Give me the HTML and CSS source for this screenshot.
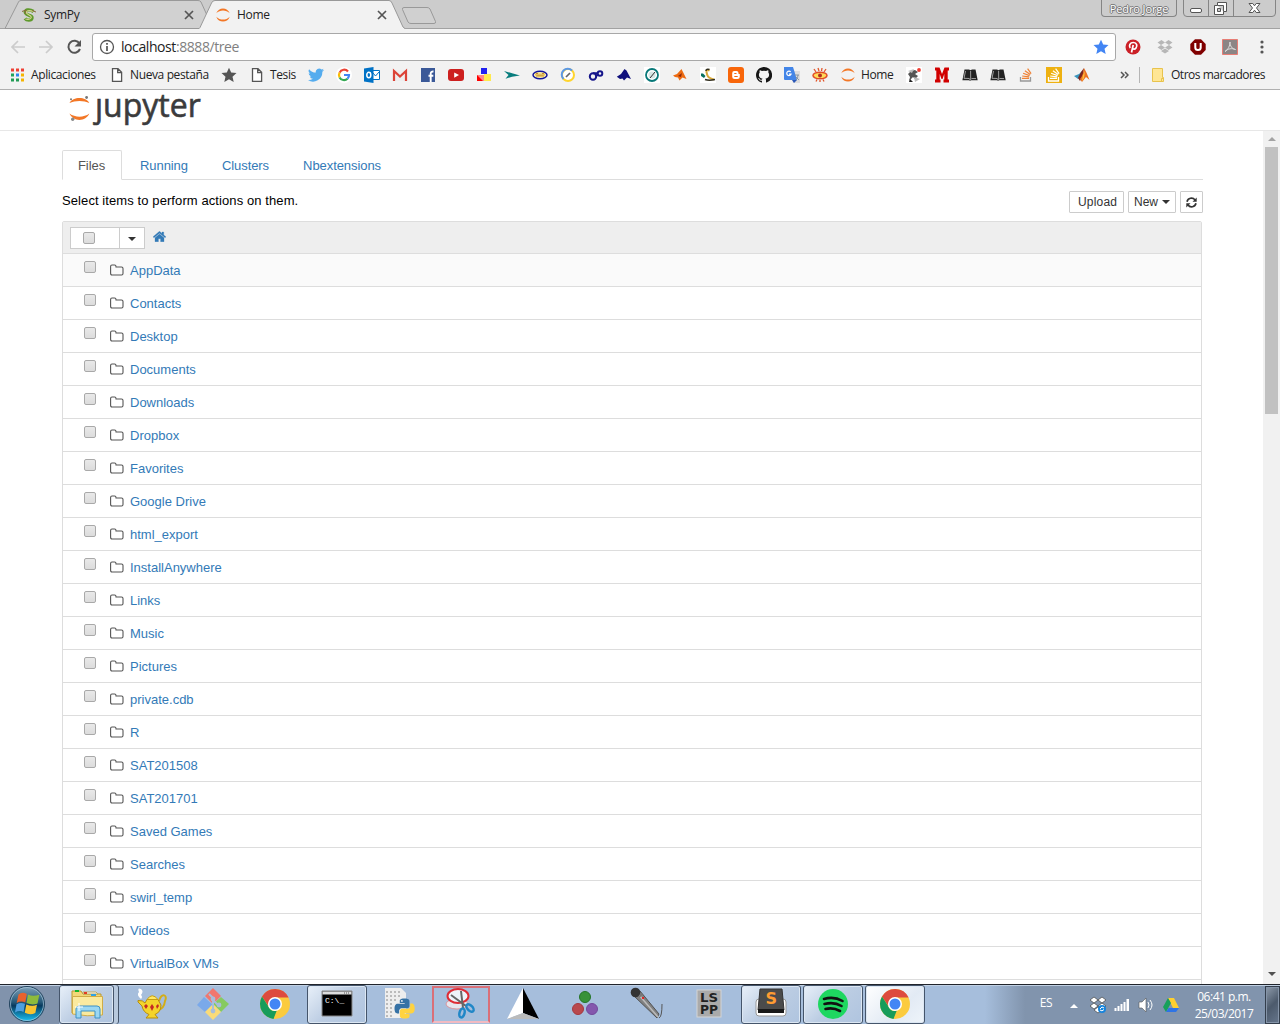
FILE: index.html
```html
<!DOCTYPE html>
<html lang="es">
<head>
<meta charset="utf-8">
<title>Home</title>
<link rel="stylesheet" href="styles.css">
</head>
<body>
<svg class="defs" width="0" height="0">
  <defs>
    <symbol id="folder" viewBox="0 0 14 12"><path d="M.6 9.3V2.4Q.6 1 2 1H4.6Q6 1 6 2.4V3H11.5Q13 3 13 4.4V9.6Q13 11 11.6 11H2Q.6 11 .6 9.3Z" fill="none" stroke="#555" stroke-width="1.1"/></symbol>
    <symbol id="ring" viewBox="0 0 16 16"><path d="M1.300 6.300C3.500-.2 12.500-.2 14.700 6.300 11 2.500 5 2.500 1.300 6.300ZM1.300 9.700C3.500 16.200 12.500 16.200 14.700 9.700 11 13.500 5 13.500 1.300 9.700Z" fill="#f37726"/></symbol>
    <symbol id="page" viewBox="0 0 16 16"><path d="M3.500 1.700H9L12.600 5.300V14.300H3.500ZM8.700 2V5.600H12.500" fill="#fff" stroke="#555" stroke-width="1.300"/></symbol>
    <symbol id="star" viewBox="0 0 16 16"><path d="M8 .7 10.200 5.600 15.500 6.100 11.500 9.700 12.700 15 8 12.200 3.300 15 4.500 9.700.5 6.100 5.800 5.600Z"/></symbol>
    <symbol id="chrome" viewBox="0 0 32 32"><circle cx="16" cy="16" r="15" fill="#fbcb3e"/><path d="M3 8.500A15 15 0 0 1 29.600 9.500H16A6.800 6.800 0 0 0 9.600 18.200Z" fill="#dd4b3e"/><path d="M3 8.500 10.100 19.400A6.800 6.800 0 0 0 17.800 22.600L14.500 30.900A15 15 0 0 1 3 8.500Z" fill="#189c5a"/><circle cx="16" cy="16" r="7" fill="#fff"/><circle cx="16" cy="16" r="5.500" fill="#4285f4"/></symbol>
    <symbol id="reader" viewBox="0 0 16 16"><path d="M2.500 2.500 7 2.600 8.500 3.300 10 2.600 13.500 2.500 15.700 13.300H9.200L8 13.800 7 13.300H.4Z" fill="#222"/><path d="M3.500 4 2 11.300 7.300 11.500 8.200 13M8.600 4 8.700 12.800M14 11.600 9.500 11.500" stroke="#bbb" stroke-width=".8" fill="none"/></symbol>
    <symbol id="stack" viewBox="0 0 16 16"><path d="M4 11.300H11M4.200 9 11.100 9.900M5.100 6.300 11.600 8.600M6.900 3.700 12.300 7.500M9.600 1.700 13.100 6.700" stroke-width="1.200" fill="none"/></symbol>
    <linearGradient id="orb" x1="0" y1="0" x2="0" y2="1"><stop offset="0" stop-color="#7fa1b9"/><stop offset=".45" stop-color="#255878"/><stop offset=".55" stop-color="#07395d"/><stop offset="1" stop-color="#19c4f5"/></linearGradient>
  </defs>
</svg>

<header class="browser">
  <div class="strip">
    <svg class="strip-art" width="1280" height="29" viewBox="0 0 1280 29">
      <path d="M0 28.500H1280" stroke="#a2a2a2"/>
      <path d="M5 28.500 18.500 2Q19 .5 21 .5H198Q200 .5 201 2L213 28.500Z" fill="#d1d1d1" stroke="#999"/>
      <path d="M199 29 200 27.500 211.500 3Q212.500.5 215 .5H389Q391 .5 392 3L403 27 405 29Z" fill="#f2f2f2"/>
      <path d="M199 28.500 200 27.500 211.500 3Q212.500.5 215 .5H389Q391 .5 392 3L403 27 405 28.500" fill="none" stroke="#999"/>
      <path d="M404 7.500H427Q429 7.500 430 9L435.500 21.500Q436 23.500 434 23.500H411Q409 23.500 408 22L402.500 9.500Q402 7.500 404 7.500Z" fill="#d0d0d0" stroke="#999"/>
    </svg>
    <div class="tab tab-back">
      <svg width="16" height="16" viewBox="0 0 16 16"><path d="M12.500 4.500C8 1.500 3 3 4.500 6S11.500 8 11 11 5.500 13.500 4 11.500" fill="none" stroke="#5f9a2c" stroke-width="3.400"/><path d="M12 4.500C8 2.500 4.500 4 5.500 6S11.500 9 10 11 6 12.500 4.500 12" fill="none" stroke="#d3d48d" stroke-width="1.200"/><path d="M1 4.500 5 3 4 7M11 3.500 15 5" stroke="#8a6b3d" fill="none"/></svg>
      <span>SymPy</span>
      <svg class="x" width="10" height="10" viewBox="0 0 10 10"><path d="M1 1 9 9M9 1 1 9" stroke="#555" stroke-width="1.700"/></svg>
    </div>
    <div class="tab tab-front">
      <svg width="16" height="16"><use href="#ring"/></svg>
      <span>Home</span>
      <svg class="x" width="10" height="10" viewBox="0 0 10 10"><path d="M1 1 9 9M9 1 1 9" stroke="#555" stroke-width="1.700"/></svg>
    </div>
    <div class="user">Pedro Jorge</div>
    <svg class="win" width="94" height="18" viewBox="0 0 94 18">
      <path d="M.5 0V13Q.5 16.500 4 16.500H89Q92.500 16.500 92.500 13V0M25.500 0V16M50.500 0V16" fill="none" stroke="#858585"/>
      <rect x="7.500" y="8.500" width="11" height="4" rx="1.500" fill="#fff" stroke="#555"/>
      <path d="M34.500 2.500H43.500V11.500H40.500V14.500H31.500V5.500H34.500Z" fill="#fff" stroke="#555"/><path d="M34.500 5.500H40.500V11.500M34.500 8.500H37.500V11.500H34.500Z" fill="#ccc" stroke="#555"/>
      <path d="M66 3.500H69.800L71.500 5.800 73.200 3.500H77L73.500 8 77 12.500H73.200L71.500 10.200 69.800 12.500H66L69.500 8Z" fill="#fff" stroke="#555"/>
    </svg>
  </div>

  <div class="toolbar">
    <svg width="92" height="32" viewBox="0 0 92 32">
      <path d="M25 18H12M18 12 12 18 18 24M39 18H52M46 12 52 18 46 24" fill="none" stroke="#ccc" stroke-width="1.700"/>
      <path d="M79.500 14.500A6 6 0 1 0 80 20" fill="none" stroke="#555" stroke-width="2"/><path d="M81 11V17.500H74.500Z" fill="#555"/>
    </svg>
    <div class="address">
      <svg width="16" height="16" viewBox="0 0 16 16"><circle cx="8" cy="8" r="6.500" fill="none" stroke="#555" stroke-width="1.300"/><path d="M8 7V12M8 4V5.800" stroke="#555" stroke-width="1.700"/></svg>
      <span class="url">localhost<span>:8888/tree</span></span>
      <svg class="fav" width="16" height="16" fill="#4285f4"><use href="#star"/></svg>
    </div>
    <div class="extensions">
      <svg width="16" height="16" viewBox="0 0 16 16"><circle cx="8" cy="8" r="7.500" fill="#cb2027"/><path d="M6.500 13.500 8.200 6M5.200 9C3.500 6.500 5 3.500 8.300 3.500 12 3.500 12.500 7 11 9S8 10 7.600 9" fill="none" stroke="#fff" stroke-width="1.700"/></svg>
      <svg width="16" height="16" viewBox="0 0 16 16"><path d="M4.500 1 8 3.500 4 6 .5 3.500ZM11.500 1 15.500 3.500 12 6 8 3.500ZM4 6 8 8.500 4.500 11 .5 8.500ZM12 6 15.500 8.500 11.500 11 8 8.500ZM4 12 8 9.500 12 12 8 14.500Z" fill="#b7b7b7"/></svg>
      <svg width="16" height="16" viewBox="0 0 16 16"><path d="M5 .3H11L15.700 5V11L11 15.700H5L.3 11V5Z" fill="#800000"/><path d="M5.300 4V8.500Q5.300 11 8 11T10.700 8.500V4" fill="none" stroke="#fff" stroke-width="2"/></svg>
      <svg width="16" height="16" viewBox="0 0 16 16"><path d="M.5.500H15.500V15.500H.5Z" fill="#8b8585" stroke="#e77d75"/><path d="M3 12.500C6 11 8 7 8 3 8 7 10 10 13.500 10.500 10 9 6 9.500 3 12.500Z" fill="none" stroke="#ddd"/></svg>
      <svg width="16" height="16" viewBox="0 0 16 16" fill="#555"><circle cx="8" cy="3" r="1.600"/><circle cx="8" cy="8" r="1.600"/><circle cx="8" cy="13" r="1.600"/></svg>
    </div>
  </div>

  <nav class="bookmarks">
    <div class="bm apps"><svg width="16" height="16" viewBox="0 0 16 16"><path d="M2 1.500h3v3H2zM7 1.500h3v3H7zM12 1.500h3v3h-3z" fill="#ee4035"/><path d="M2 6.500h3v3H2z" fill="#21a35b"/><path d="M7 6.500h3v3H7z" fill="#2f86ee"/><path d="M12 6.500h3v3h-3z" fill="#f5b400"/><path d="M2 11.500h3v3H2zM7 11.500h3v3H7z" fill="#219b55"/><path d="M12 11.500h3v3h-3z" fill="#f5b400"/></svg><span>Aplicaciones</span></div>
    <div class="bm nueva"><svg width="16" height="16"><use href="#page"/></svg><span>Nueva pestaña</span></div>
    <div class="bm"><svg width="16" height="16" fill="#555"><use href="#star"/></svg></div>
    <div class="bm tesis"><svg width="16" height="16"><use href="#page"/></svg><span>Tesis</span></div>
    <div class="bm"><svg width="16" height="16" viewBox="0 0 24 24"><path d="M24 4.600a10 10 0 0 1-2.800.8A5 5 0 0 0 23.300 2.700a10 10 0 0 1-3.100 1.200A4.900 4.900 0 0 0 11.800 8.400 14 14 0 0 1 1.700 3.200a4.900 4.900 0 0 0 1.500 6.600A5 5 0 0 1 1 9.200a4.900 4.900 0 0 0 3.900 4.900 5 5 0 0 1-2.200.1 4.900 4.900 0 0 0 4.600 3.400A9.900 9.900 0 0 1 0 19.600 14 14 0 0 0 21.500 7.100 10 10 0 0 0 24 4.600z" fill="#55acee"/></svg></div>
    <div class="bm"><svg width="16" height="16" viewBox="0 0 16 16"><circle cx="8" cy="8" r="8" fill="#fff"/><g fill="none" stroke-width="2.200"><path d="M12 4.500A5 5 0 0 0 3.600 5.600" stroke="#ea4335"/><path d="M3.600 5.600A5 5 0 0 0 3.600 10.400" stroke="#fbbc05"/><path d="M3.600 10.400A5 5 0 0 0 11.500 11.700" stroke="#34a853"/><path d="M11.500 11.700A5 5 0 0 0 13 8H8" stroke="#4285f4"/></g></svg></div>
    <div class="bm"><svg width="16" height="16" viewBox="0 0 16 16"><path d="M8 3.500H15.500V12.500H8Z" fill="#fff" stroke="#0072c6"/><path d="M9 6 11.500 9 15 5" fill="none" stroke="#0072c6"/><path d="M0 1.500 9.500 0V16L0 14.500Z" fill="#0072c6"/><ellipse cx="4.800" cy="8" rx="2" ry="2.700" fill="none" stroke="#fff" stroke-width="1.500"/></svg></div>
    <div class="bm"><svg width="16" height="16" viewBox="0 0 16 16"><path d="M1 3H15V14H1Z" fill="#eee"/><path d="M2 14V4L8 9.500 14 4V14" fill="none" stroke="#dc4337" stroke-width="2.200"/></svg></div>
    <div class="bm"><svg width="16" height="16" viewBox="0 0 16 16"><path d="M1 1H15V15H1Z" fill="#3b5998"/><path d="M10.700 15V6.500Q10.700 4.300 13.500 4.500M8.500 8.700H13.300" fill="none" stroke="#fff" stroke-width="1.900"/></svg></div>
    <div class="bm"><svg width="16" height="16" viewBox="0 0 16 16"><rect y="2" width="16" height="12" rx="3" fill="#cd201f"/><path d="M6.200 5.500 11 8 6.200 10.700Z" fill="#fff"/></svg></div>
    <div class="bm"><svg width="16" height="16" viewBox="0 0 16 16"><path d="M5 1h6v6H5z" fill="#2020f0"/><path d="M1 8h7v6H1z" fill="#f88"/><path d="M8 7h7v7H8z" fill="#ffe94d"/><path d="M1 8 7 14H1z" fill="#f00"/></svg></div>
    <div class="bm"><svg width="16" height="16" viewBox="0 0 16 16"><path d="M0 4 9 6.500 15.900 8.500 8 9.700 1.500 11.700 4.500 8Z" fill="#087d7d"/></svg></div>
    <div class="bm"><svg width="16" height="16" viewBox="0 0 16 16"><ellipse cx="8" cy="8" rx="7" ry="3.700" fill="#fff4ac" stroke="#15159c" stroke-width="1.500"/><path d="M4 8.500V6.500H6V9M8 9V6.500M10 9V6.500H12V8.500M4 9H12" fill="none" stroke="#c58b26"/></svg></div>
    <div class="bm"><svg width="16" height="16" viewBox="0 0 16 16"><circle cx="8" cy="8" r="6" fill="#fff" stroke="#ffd52d" stroke-width="2"/><path d="M3.500 12A6 6 0 0 1 12 3.500" fill="none" stroke="#5b98e7" stroke-width="2"/><path d="M6 10 10 6" stroke="#666" stroke-width="1.700"/></svg></div>
    <div class="bm"><svg width="16" height="16" viewBox="0 0 16 16" fill="none" stroke="#15158a" stroke-width="2"><circle cx="5" cy="9.500" r="3.200"/><circle cx="12" cy="6.500" r="2.300"/><path d="M7.500 9.500 10 7.500M5 6.300H10"/></svg></div>
    <div class="bm"><svg width="16" height="16" viewBox="0 0 16 16"><path d="M.8 9.700 5 7 8.500 2 10.500 3.500 15 12 11 10.500 8 13.500 6.500 11.500 4 12Z" fill="#10107c"/></svg></div>
    <div class="bm"><svg width="16" height="16" viewBox="0 0 16 16"><path d="M0 0H16V16H0Z" fill="#fff"/><circle cx="8" cy="8" r="6" fill="none" stroke="#087878" stroke-width="1.800"/><circle cx="8" cy="8" r="3.600" fill="#d6e6e4"/><path d="M6 11 11 5" stroke="#333"/></svg></div>
    <div class="bm"><svg width="16" height="16" viewBox="0 0 16 16"><path d="M1 8.500 5 7 9.500 2 11 5 14.500 12 10.500 10.500 7.500 13.500 6 10.500 3 10Z" fill="#ed6b12"/><path d="M6 9 10 6 9 10Z" fill="#8b280d"/></svg></div>
    <div class="bm"><svg width="16" height="16" viewBox="0 0 16 16"><path d="M0 0H16V16H0Z" fill="#fff"/><path d="M9.500 3.500Q6 2 6.500 5T8 9.500 14 12.500" fill="none" stroke="#d9a93a" stroke-width="2"/><path d="M9.500 2.500Q6 1.500 6 4M5 12.500Q9 14 15 12.500" fill="none" stroke="#302c1c" stroke-width="1.500"/><path d="M1 6.500H3L5.500 9 4 11 1 9Z" fill="#07705e"/></svg></div>
    <div class="bm"><svg width="16" height="16" viewBox="0 0 16 16"><rect width="16" height="16" rx="3" fill="#f8660a"/><path d="M6.200 4H8.500Q10.500 4 10.500 6V7H11.800V9.700Q11.800 12 9.500 12H6.500Q4.200 12 4.200 9.700V6.300Q4.200 4 6.200 4Z" fill="#fff"/><path d="M6.300 6.500H8.500M6.300 9.500H9.700" stroke="#f8660a" stroke-width="1.200"/></svg></div>
    <div class="bm"><svg width="16" height="16" viewBox="0 0 16 16"><path fill="#161616" d="M8 0C3.600 0 0 3.600 0 8c0 3.500 2.300 6.500 5.500 7.600.4.100.5-.2.500-.4v-1.500c-2.200.5-2.700-.9-2.700-.9-.4-.9-.9-1.200-.9-1.200-.7-.5.1-.5.1-.5.800.1 1.200.8 1.200.8.700 1.300 1.900.9 2.300.7.1-.5.300-.9.500-1.100-1.800-.2-3.600-.9-3.600-4 0-.9.300-1.600.8-2.100-.1-.2-.4-1 .1-2.200 0 0 .7-.2 2.200.8a7.400 7.400 0 0 1 4 0c1.500-1 2.200-.8 2.200-.8.400 1.200.1 2 .1 2.200.5.600.8 1.300.8 2.100 0 3.100-1.900 3.800-3.700 4 .3.300.6.800.6 1.500v2.200c0 .2.100.5.600.4A8 8 0 0 0 8 0z"/></svg></div>
    <div class="bm"><svg width="16" height="16" viewBox="0 0 16 16"><path d="M6 4H16V16H9Z" fill="#ddd"/><path d="M0 0H9L13 13H1Q0 13 0 12Z" fill="#4285e8"/><path d="M13 13H8L10 16Z" fill="#2957b8"/><path d="M6.700 5A2.200 2.200 0 1 0 7 7.200H5" fill="none" stroke="#fff" stroke-width="1.200"/><path d="M10.500 8H15M12 13Q14 11 14 8M12 10 15 13" fill="none" stroke="#789" stroke-width=".8"/></svg></div>
    <div class="bm"><svg width="16" height="16" viewBox="0 0 16 16"><ellipse cx="8" cy="8.500" rx="7" ry="3.300" fill="#ffdb59" stroke="#e14b27" stroke-width="1.500"/><circle cx="8" cy="8.500" r="2" fill="#b52d21"/><path d="M2 2 4 5M6 1 7 4M10 1 9.500 4M14 2 12 5M4 14.500 5 12.500M8 15V13M12 14.500 11 12.500" stroke="#e2562a" stroke-width="1.300"/></svg></div>
    <div class="bm homebm"><svg width="16" height="16"><use href="#ring"/></svg><span>Home</span></div>
    <div class="bm"><svg width="16" height="16" viewBox="0 0 16 16"><path d="M0 0H16V16H0Z" fill="#fff"/><path d="M2 7 5 4 9 3 12 5 9 7 12 9 9 12 7 10 5 12 3 14 4 10Z" fill="#555"/><path d="M2 4 8 2 6 6M8 10 14 12 9 15" fill="#bbb"/><path d="M4 12 7 15H3Z" fill="#222"/><circle cx="13" cy="3" r="1.900" fill="#ed3c31"/></svg></div>
    <div class="bm"><svg width="16" height="16" viewBox="0 0 16 16"><path d="M1 .5H5.500L8 7 10.500.500H15V3.500H13.700V12.500H15V15.500H9.500V12.500H10.300V7L8.500 12H7.500L5.700 7V12.500H6.500V15.500H1V12.500H2.300V3.500H1Z" fill="#d10000"/></svg></div>
    <div class="bm"><svg width="16" height="16"><use href="#reader"/></svg></div>
    <div class="bm"><svg width="16" height="16"><use href="#reader"/></svg></div>
    <div class="bm"><svg width="16" height="16" viewBox="0 0 16 16"><use href="#stack" stroke="#ef8236"/><path d="M2.500 10V14H12.500V10" fill="none" stroke="#999" stroke-width="1.300"/></svg></div>
    <div class="bm"><svg width="16" height="16" viewBox="0 0 16 16"><path d="M0 0H16V16H0Z" fill="#eeb111"/><use href="#stack" stroke="#fff"/><path d="M2.500 10V14H12.500V10" fill="none" stroke="#fff" stroke-width="1.300"/></svg></div>
    <div class="bm"><svg width="16" height="16" viewBox="0 0 16 16"><path d="M0 9 5 7 8 4 6 11 4 12Z" fill="#3995bd"/><path d="M4 11 7 5 10 1 9 9 6 14Z" fill="#7d241b"/><path d="M10 1Q12 4 15.500 13L12 10 8 15 6 12Q9 9 10 1Z" fill="#eb7322"/><path d="M9 8 11 4 10 11 8 14Z" fill="#ffc03b"/></svg></div>
    <svg class="more" width="9" height="8" viewBox="0 0 9 8"><path d="M1 1 4 4 1 7M5 1 8 4 5 7" fill="none" stroke="#555" stroke-width="1.500"/></svg>
    <div class="bm others"><svg width="16" height="16" viewBox="0 0 16 16"><path d="M2.500 1.500H12.500V10.500H13.500V14.500H2.500Z" fill="#ffe694" stroke="#e8c34d"/><path d="M11.500 14V11.500H13" fill="none" stroke="#e8c34d"/></svg><span>Otros marcadores</span></div>
  </nav>
</header>

<div class="brand">
  <svg width="24" height="30" viewBox="0 0 24 30"><path d="M1.500 9C5 2.300 18 2.300 21.300 9 16 6.300 7 6.300 1.500 9ZM1.500 19.600C5 28 18 28 21.300 19.600 16 23.800 7 23.800 1.500 19.600Z" fill="#f37726"/><circle cx="3" cy="5.300" r="1" fill="#777"/><circle cx="18.600" cy="3.500" r="1.400" fill="#777"/><circle cx="4.700" cy="25.300" r="1.700" fill="#888"/></svg>
  <div class="wordmark">jupyter</div>
</div>

<div class="viewport">
  <main>
    <ul class="nav">
      <li class="on">Files</li><li>Running</li><li>Clusters</li><li>Nbextensions</li>
    </ul>
    <div class="actions">
      <p>Select items to perform actions on them.</p>
      <button class="upload">Upload</button>
      <button class="new">New <i class="caret"></i></button>
      <button class="refresh"><svg width="11" height="11" viewBox="0 0 11 11"><path d="M1 4.700A4.500 4.500 0 0 1 9 3M10 6.300A4.500 4.500 0 0 1 2 8" fill="none" stroke="#333" stroke-width="1.700"/><path d="M10.700.500V4.700H6.500ZM.3 10.500V6.300H4.500Z" fill="#333"/></svg></button>
    </div>
    <div class="list">
      <div class="list-head">
        <div class="select"><span><i class="check"></i></span><b><i class="caret"></i></b></div>
        <svg width="13" height="11" viewBox="0 0 13 11"><path d="M6.500.3 9 2.400V1H10.700V3.900L12.900 5.700 12.100 6.800 6.500 2.200.9 6.800.1 5.700ZM2 6.700 6.500 3 11 6.700V10.700H7.600V7.700H5.400V10.700H2Z" fill="#337ab7" stroke="#337ab7" stroke-width=".3"/></svg>
      </div>
      <div class="row hover"><i class="check"></i><svg><use href="#folder"/></svg><a>AppData</a></div>
      <div class="row"><i class="check"></i><svg><use href="#folder"/></svg><a>Contacts</a></div>
      <div class="row"><i class="check"></i><svg><use href="#folder"/></svg><a>Desktop</a></div>
      <div class="row"><i class="check"></i><svg><use href="#folder"/></svg><a>Documents</a></div>
      <div class="row"><i class="check"></i><svg><use href="#folder"/></svg><a>Downloads</a></div>
      <div class="row"><i class="check"></i><svg><use href="#folder"/></svg><a>Dropbox</a></div>
      <div class="row"><i class="check"></i><svg><use href="#folder"/></svg><a>Favorites</a></div>
      <div class="row"><i class="check"></i><svg><use href="#folder"/></svg><a>Google Drive</a></div>
      <div class="row"><i class="check"></i><svg><use href="#folder"/></svg><a>html_export</a></div>
      <div class="row"><i class="check"></i><svg><use href="#folder"/></svg><a>InstallAnywhere</a></div>
      <div class="row"><i class="check"></i><svg><use href="#folder"/></svg><a>Links</a></div>
      <div class="row"><i class="check"></i><svg><use href="#folder"/></svg><a>Music</a></div>
      <div class="row"><i class="check"></i><svg><use href="#folder"/></svg><a>Pictures</a></div>
      <div class="row"><i class="check"></i><svg><use href="#folder"/></svg><a>private.cdb</a></div>
      <div class="row"><i class="check"></i><svg><use href="#folder"/></svg><a>R</a></div>
      <div class="row"><i class="check"></i><svg><use href="#folder"/></svg><a>SAT201508</a></div>
      <div class="row"><i class="check"></i><svg><use href="#folder"/></svg><a>SAT201701</a></div>
      <div class="row"><i class="check"></i><svg><use href="#folder"/></svg><a>Saved Games</a></div>
      <div class="row"><i class="check"></i><svg><use href="#folder"/></svg><a>Searches</a></div>
      <div class="row"><i class="check"></i><svg><use href="#folder"/></svg><a>swirl_temp</a></div>
      <div class="row"><i class="check"></i><svg><use href="#folder"/></svg><a>Videos</a></div>
      <div class="row"><i class="check"></i><svg><use href="#folder"/></svg><a>VirtualBox VMs</a></div>
      <div class="row"></div>
    </div>
  </main>
  <div class="scrollbar"><i class="up"></i><div class="thumb"></div><i class="down"></i></div>
</div>

<footer class="taskbar">
  <div class="start"><svg width="38" height="38" viewBox="0 0 38 38"><circle cx="19" cy="19" r="17.500" fill="url(#orb)" stroke="#24455f"/><circle cx="19" cy="19" r="16.500" fill="none" stroke="#a9c6da" stroke-opacity=".7"/><path d="M10.500 9.500Q14 6.500 18.800 9L17.300 17.500Q12.500 15.500 8.700 18Z" fill="#e8622c"/><path d="M20 9.500Q25 12 31.300 9.700L29.500 18.500Q24 20.500 18.500 18Z" fill="#8dbb3c"/><path d="M8.500 19.300Q12.500 17 17 18.800L15.500 27Q11.500 25 7 27.500Z" fill="#4d9fe0"/><path d="M18.300 19.500Q24 21.800 29 19.800L27.300 28Q22 30.500 16.800 27.700Z" fill="#f8c431"/></svg></div>
  <div class="task open stacked"><svg width="34" height="34" viewBox="0 0 34 34"><path d="M2 4H11L13 7H31V26H2Z" fill="#f3d878" stroke="#b99731"/><path d="M5 3H9V5H5Z" fill="#15b52c"/><path d="M13 5H26L28 7H13Z" fill="#fff" stroke="#bca65a"/><path d="M14 5H17V7H14Z" fill="#e23a24"/><path d="M21 7H26V9H21Z" fill="#31a2e6"/><path d="M2.500 9.500H32.500V28Q17 30 2.500 27Z" fill="#fbea9f" stroke="#d0ac47"/><path d="M6 31V22Q6 19 9 19H27Q30 19 30 22V31H25V24H11V31Z" fill="#9bd7f2" stroke="#3d91c6"/><path d="M9 16V24M5 20H13" stroke="#fff"/></svg></div>
  <div class="task"><svg width="34" height="34" viewBox="0 0 34 34"><path d="M7 12Q2 8 5 5 3 0 7 2 10 4 7 8Q9 10 7 12" fill="#fff"/><path d="M25 14C28 5 34 8 31 14Q30 22 24 23" fill="none" stroke="#d3ad16" stroke-width="2"/><path d="M4 13.500Q9 13 11 16L13 12.500H24L27 18Q27 25 21 27.500L24 31H12L15 27.500Q9 25 8 19L4 15Z" fill="#f4d42b" stroke="#b78d0c"/><path d="M13 12.500Q18 5 24 12.500Z" fill="#ffe863" stroke="#c69e15"/><path d="M12 17 14 19 12 22 10 19ZM18 17 20 20 18 24 16 20ZM24 17 25 19 23 22 22 19Z" fill="#c62b24"/></svg></div>
  <div class="task"><svg width="34" height="34" viewBox="0 0 34 34"><path d="M17 1 25 9 17 17 9 9Z" fill="#f0776f"/><path d="M8 10 17 18 9 25 1 18Z" fill="#7aa9ea"/><path d="M25 10 33 17 25 25 17 17Z" fill="#86ca60"/><path d="M17 17 25 25 17 33 9 25Z" fill="#fadb78"/><path d="M13 7 17 11V25M17 13 22 18" fill="none" stroke="#a7bedb" stroke-width="2"/><circle cx="17" cy="12" r="2.400" fill="#a7bedb"/><circle cx="17" cy="24" r="2.400" fill="#a7bedb"/><circle cx="23" cy="18" r="2.400" fill="#a7bedb"/></svg></div>
  <div class="task"><svg width="32" height="32"><use href="#chrome"/></svg></div>
  <div class="task open"><svg width="32" height="28" viewBox="0 0 32 28"><path d="M1 1H31V26H1Z" fill="#000" stroke="#888"/><path d="M1.500 1.500H30.500V4.500H1.500Z" fill="#ddd"/><path d="M23 3H29" stroke="#555" stroke-dasharray="1 1"/><text x="4" y="13" class="prompt">C:\_</text></svg></div>
  <div class="task"><svg width="34" height="34" viewBox="0 0 34 34"><path d="M3 1H19L24 6V31H3Z" fill="#eee"/><path d="M5 4V30M9 4V30M13 4V14M17 4V12" stroke="#aaa" stroke-width="1.500" stroke-dasharray="2 2"/><g transform="translate(12.500 11.500) scale(.84)"><path d="M12 0C6 0 6.300 2.600 6.300 2.600V5.300H12.100V6.200H4S0 5.700 0 12 3.400 17.900 3.400 17.900H5.500V15.100S5.400 11.700 8.800 11.700H14.600S17.800 11.700 17.800 8.500V3.200S18.300 0 12 0Z" fill="#3672a5"/><path d="M12.200 23.900C18.200 23.900 17.900 21.300 17.900 21.300V18.600H12.100V17.800H20.200S24.100 18.200 24.100 12 20.700 6 20.700 6H18.700V8.900S18.800 12.300 15.400 12.300H9.600S6.400 12.200 6.400 15.400V20.700S5.900 23.900 12.200 23.900Z" fill="#ffd340"/><circle cx="8.800" cy="2.900" r="1" fill="#fff"/></g></svg></div>
  <div class="task snip"><svg width="34" height="34" viewBox="0 0 34 34"><ellipse cx="13" cy="17" rx="11" ry="5" fill="#e6e6ee" stroke="#d9979e"/><ellipse cx="14" cy="9" rx="10.500" ry="7" fill="#eef3fa" stroke="#df2c35" stroke-width="2"/><path d="M7 8 22 19M17 4 19 21" stroke="#666" stroke-width="2"/><g fill="none" stroke="#2187c7" stroke-width="2.500"><ellipse cx="18" cy="26" rx="2.500" ry="4.500" transform="rotate(15 18 26)"/><ellipse cx="26" cy="21" rx="2.500" ry="4.500" transform="rotate(-45 26 21)"/></g></svg></div>
  <div class="task"><svg width="34" height="34" viewBox="0 0 34 34"><path d="M17 1 17 26 1 32Z" fill="#fff"/><path d="M17 1 33 32 17 26Z" fill="#000"/><path d="M1 32 17 26 33 32Z" fill="#bbb"/></svg></div>
  <div class="task"><svg width="34" height="34" viewBox="0 0 34 34"><circle cx="17" cy="10" r="5.500" fill="#389239" stroke="#247427"/><circle cx="10" cy="22" r="5.500" fill="#b9484d" stroke="#a5383e"/><circle cx="24" cy="22" r="5.500" fill="#8457ad" stroke="#73489b"/></svg></div>
  <div class="task"><svg width="34" height="34" viewBox="0 0 34 34"><path d="M4 9 10 4 29 27 27 31Z" fill="#818181" stroke="#525252"/><path d="M9 8 28 30" stroke="#bbb" stroke-width="1.500"/><circle cx="5.500" cy="5.500" r="4.800" fill="#333"/><path d="M9 10 12 7" stroke="#777" stroke-width="2"/><circle cx="13" cy="11" r="1" fill="red"/><path d="M29 31Q32 30 32 17" fill="none" stroke="#555"/></svg></div>
  <div class="task"><svg width="26" height="30" viewBox="0 0 26 30"><rect x="1" y="1" width="24" height="27" fill="#aaa" stroke="#d4d4d4"/><text x="4" y="13" class="lspp" textLength="18" lengthAdjust="spacingAndGlyphs">LS</text><text x="4" y="25" class="lspp" textLength="18" lengthAdjust="spacingAndGlyphs">PP</text></svg></div>
  <div class="task open"><svg class="st" width="32" height="30" viewBox="0 0 32 30"><rect x="1" y="12" width="30" height="17" rx="3" fill="#fff" stroke="#999"/><path d="M5 2H27L29 23H3Z" fill="#4b4b4b" stroke="#333"/><path d="M3 22H29V26H3Z" fill="#191919"/><text x="10.500" y="17" class="sublime">S</text></svg></div>
  <div class="task open"><svg width="32" height="32" viewBox="0 0 32 32"><circle cx="16" cy="16" r="15" fill="#1ed760"/><path d="M7 11Q17 8 25.500 13M7.500 16Q17 13.500 24.500 18M8.500 21Q16 19 23 23" fill="none" stroke="#111" stroke-width="2.600" stroke-linecap="round"/></svg></div>
  <div class="task open bright"><svg width="32" height="32"><use href="#chrome"/></svg></div>
  <div class="tray">
    <span class="lang">ES</span>
    <svg width="110" height="20" viewBox="0 0 110 20">
      <path d="M1 13 5 9 9 13Z" fill="#fff"/>
      <path d="M25 2 29 5 25 8 21 5ZM33 2 37 5 33 8 29 5ZM25 8 29 11 25 14 21 11ZM33 8 37 11 33 14 29 11ZM29 12 33 15 29 18 25 15Z" fill="#fff" stroke="#444" stroke-width=".7"/><circle cx="33" cy="14" r="4" fill="#1684dc"/><path d="M31 14Q33 10.500 35 13M35 14.500Q33 17 31 15" fill="none" stroke="#fff"/>
      <path d="M45.500 13h2v3h-2zM48.500 11h2v5h-2zM51.500 9h2v7h-2zM54.500 7h2v9h-2zM57.500 4h2.500v12h-2.500z" fill="#fff"/>
      <path d="M70 7H73L77 3V17L73 13H70Z" fill="#fff" stroke="#555" stroke-width=".6"/><path d="M79 7Q81 10 79 13M81 5Q85 10 81 15" fill="none" stroke="#fff"/>
      <path d="M99 3H105L110 13H104Z" fill="#ffcf2e"/><path d="M99 3 102 8 97 17 94 12Z" fill="#17a05b"/><path d="M99.500 13H110L107 17H97Z" fill="#2e74e5"/>
    </svg>
    <div class="clock"><span>06:41 p.m.</span><span>25/03/2017</span></div>
    <div class="peek"></div>
  </div>
</footer>
</body>
</html>
```
FILE: styles.css
```css
* { box-sizing: border-box; }
body { margin: 0; width: 1280px; height: 1024px; overflow: hidden; display: flex; flex-direction: column; background: #fff; font: 13px/20px "Liberation Sans", Arial, sans-serif; color: #000; }
svg { flex: none; display: block; }
.defs { position: absolute; }

.browser { flex: none; height: 90px; background: #f2f2f2; border-bottom: 1px solid #b0b0b0; font: 12px/16px "Open Sans", sans-serif; color: #222; }
.strip { position: relative; height: 29px; background: #ccc; display: flex; }
.strip-art { position: absolute; left: 0; top: 0; }
.tab { position: relative; display: flex; align-items: center; height: 29px; gap: 7px; letter-spacing: -.3px; }
.tab-back { width: 194px; padding-left: 21px; }
.tab-front { width: 194px; padding-left: 21px; gap: 6px; }
.tab .x { margin-left: auto; }
.tab-front .x { margin-right: 1px; }
.user { margin-left: auto; position: relative; width: 76px; height: 17px; border: 1px solid #858585; border-top: 0; border-radius: 0 0 4px 4px; text-align: center; line-height: 18px; font-size: 11px; letter-spacing: -.1px; color: #fff; text-shadow: 1px 0 #777, -1px 0 #777, 0 1px #777, 0 -1px #777; }
.win { position: relative; margin: 0 3px 0 6px; }
.toolbar { height: 31px; display: flex; }
.address { width: 1024px; height: 28px; margin-top: 4px; border: 1px solid #a8a8a8; border-radius: 3px; background: #fff; display: flex; align-items: center; padding: 0 6px; gap: 6px; }
.url { font-size: 14px; letter-spacing: -.42px; }
.url span { color: #808080; }
.fav { margin-left: auto; }
.extensions { display: flex; gap: 16.3px; padding: 10px 0 0 9px; }
.bookmarks { height: 30px; display: flex; align-items: center; padding-left: 3px; }
.bm { flex: none; width: 28px; display: flex; align-items: center; padding-left: 6px; gap: 5px; white-space: nowrap; letter-spacing: -.38px; }
.bm.apps { width: 100px; gap: 6px; }
.bm.nueva { width: 112px; }
.bm.tesis { width: 59px; }
.bm.homebm { width: 66px; }
.more { margin: 0 10px 0 24px; }
.bm.others { width: 130px; height: 16px; border-left: 1px solid #b5b5b5; padding-left: 10px; letter-spacing: -.48px; }

.brand { flex: none; height: 41px; border-bottom: 1px solid #e7e7e7; display: flex; padding: 4px 0 0 68px; gap: 3px; }
.wordmark { position: relative; height: 34px; margin-top: -4px; font: 32px/30px "Open Sans", sans-serif; color: #3b3b3c; -webkit-text-stroke: .6px #3b3b3c; }
/* the wordmark's j has no dot */
.wordmark::before { content: ""; position: absolute; left: -2px; top: 0; width: 12px; height: 8px; background: #fff; }

.viewport { flex: none; height: 853px; display: flex; overflow: hidden; }
main { width: 1141px; margin-left: 62px; }
.nav { list-style: none; margin: 19px 0 0; padding: 0; height: 30px; display: flex; gap: 2px; border-bottom: 1px solid #ddd; color: #337ab7; }
.nav li { height: 30px; padding: 5px 15px 0; border: 1px solid transparent; letter-spacing: -.07px; }
.nav .on { width: 60px; color: #555; background: #fff; border-color: #ddd #ddd #fff; border-radius: 2px 2px 0 0; }
.actions { height: 41px; display: flex; gap: 4px; padding-top: 11px; }
.actions p { margin: 0 auto 0 0; letter-spacing: .09px; }
.actions button { height: 22px; border: 1px solid #ccc; border-radius: 1px; background: #fff; color: #333; font: 12px/18px "Liberation Sans", Arial, sans-serif; padding: 0 5px; display: flex; align-items: center; }
.actions .upload { width: 55px; padding-left: 8px; letter-spacing: .2px; }
.actions .new { width: 48px; gap: 4px; }
.actions .refresh { width: 23px; }
.caret { display: block; border: 4px solid transparent; border-top-color: #333; border-bottom: 0; }
.list { width: 1140px; border: 1px solid #ddd; border-radius: 2px 2px 0 0; }
.list-head { height: 32px; background: #eee; border-bottom: 1px solid #ddd; display: flex; padding: 5px 0 0 7px; gap: 8px; }
.list-head > svg { margin-top: 4px; }
.select { width: 75px; height: 22px; border: 1px solid #ccc; background: #fff; display: flex; }
.select span { width: 49px; border-right: 1px solid #ccc; padding: 4px 0 0 12px; }
.select b { padding: 9px 0 0 8px; }
.check { flex: none; display: block; width: 12px; height: 12px; border: 1px solid #a9a9a9; border-radius: 2px; background: linear-gradient(#e9e9e9, #dcdcdc); }
.row { height: 33px; border-bottom: 1px solid #ddd; display: flex; align-items: flex-start; padding-left: 21px; }
.row.hover { background: #fafafa; }
.row .check { margin-top: 7px; }
.row svg { width: 14px; height: 12px; margin: 10px 6px 0 14px; }
.row a { color: #337ab7; margin-top: 7px; }
.scrollbar { width: 17px; margin-left: auto; background: #f1f1f1; display: flex; flex-direction: column; align-items: center; }
.scrollbar i { border: 4px solid transparent; }
.scrollbar .up { margin-top: 2px; border-bottom-color: #a3a3a3; }
.thumb { width: 13px; height: 267px; margin-top: 6px; background: #c1c1c1; }
.scrollbar .down { margin-top: auto; margin-bottom: 4px; border-top-color: #505050; }

.taskbar { flex: none; height: 40px; border-top: 1px solid #20242b; box-shadow: inset 0 1px #c0d0e3; display: flex; background: linear-gradient(90deg, #8193ac 0 59px, #a6bedc 59px 985px, #8194ad 1025px); }
.start { width: 59px; display: flex; justify-content: center; padding-right: 5px; }
.task { width: 60px; margin-right: 2px; height: 39px; display: flex; align-items: center; justify-content: center; }
.task > svg { margin-top: -1px; }
.open { border: 1px solid #45556b; border-radius: 3px; background: linear-gradient(135deg, #e8f0f9, #bccde3 50%, #afc4df); box-shadow: inset 0 0 0 1px #dce7f3; }
.bright { background: linear-gradient(135deg, #fff, #e2eaf4 60%, #eef4fa); }
.stacked { width: 55px; margin-right: 7px; box-shadow: inset 0 0 0 1px #dce7f3, 2px 0 #b8c9dd, 4px 0 #b8c9dd, 5px 0 #45556b; }
.snip { width: 58px; margin: 1px 3px 1px 1px; height: 37px; border: 2px solid #d96f78; border-bottom-color: #f2bac1; }
.prompt { font: 8px "Liberation Mono", monospace; fill: #fff; }
.lspp { font: bold 12px "DejaVu Sans", sans-serif; fill: #222; }
.sublime { font: bold 16px "DejaVu Sans", sans-serif; fill: #ff9c32; }
.task > .st { margin-top: -5px; }
.tray { margin-left: auto; display: flex; align-items: center; color: #fff; font: 12px/17px "Open Sans", sans-serif; letter-spacing: -.5px; }
.tray .lang { margin: -5px 17px 0 0; }
.clock { width: 72px; margin-left: 9px; margin-right: 1px; display: flex; flex-direction: column; align-items: center; }
.peek { width: 15px; height: 38px; margin-left: 4px; border: 1px solid #333e4c; background: linear-gradient(135deg, #8e9bab, #4c5a6c 50%, #66768c); box-shadow: inset 0 0 0 1px #8594a8; }
```
